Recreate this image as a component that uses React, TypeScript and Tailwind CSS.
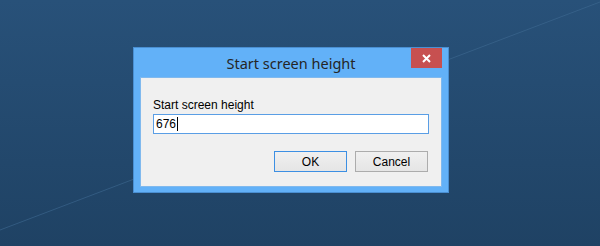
import React from 'react'

function Desktop({ children }: { children: React.ReactNode }) {
  return (
    <div className="relative h-[246px] w-[600px] overflow-hidden bg-gradient-to-b from-[#285179] to-[#1f4264]">
      <svg className="absolute inset-0" width="600" height="246" viewBox="0 0 600 246">
        <line x1="0" y1="230" x2="600" y2="2" stroke="#3f6a92" strokeWidth="1" opacity="0.6" />
      </svg>
      <div className="relative pl-[133px] pt-[47px]">{children}</div>
    </div>
  )
}

function CloseButton() {
  return (
    <button className="flex h-[20px] w-[31px] items-center justify-center bg-[#c75050]">
      <svg width="9" height="9" viewBox="0 0 9 9">
        <path d="M1 1 L8 8 M8 1 L1 8" stroke="#ffffff" strokeWidth="2" />
      </svg>
    </button>
  )
}

function WinButton({ label, primary }: { label: string; primary?: boolean }) {
  return (
    <button
      className={`h-[21px] w-[73px] border bg-gradient-to-b from-[#f0f0f0] to-[#e5e5e5] text-[12px] text-black ${
        primary ? 'border-[#3c8fe3]' : 'border-[#acacac]'
      }`}
      style={{ fontFamily: '"Liberation Sans", Arial, sans-serif' }}
    >
      {label}
    </button>
  )
}

export default function App() {
  return (
    <Desktop>
      <div className="flex h-[146px] w-[316px] flex-col border border-[#4a8fd2] bg-[#62b1f8] px-[6px] pb-[5px]">
        <div className="relative flex h-[29px] items-center justify-center">
          <span
            className="pt-[2px] text-[14.5px] text-[#252525]"
            style={{ fontFamily: '"Noto Sans", "Open Sans", sans-serif' }}
          >
            Start screen height
          </span>
          <div className="absolute right-0 top-0">
            <CloseButton />
          </div>
        </div>
        <div
          className="flex flex-1 flex-col border border-[#80b9ee] bg-[#f0f0f0] pl-[12px] pr-[13px] pt-[20px]"
          style={{ fontFamily: '"Liberation Sans", Arial, sans-serif' }}
        >
          <label className="text-[12px] leading-[14px] text-black">Start screen height</label>
          <div className="mt-[2px] flex h-[20px] w-[276px] items-center border border-[#5a9ee5] bg-white px-[2px] text-[12px] text-black">
            <span>676</span>
            <span className="ml-px h-[14px] w-px bg-black" />
          </div>
          <div className="mt-[17px] flex justify-end gap-[8px]">
            <WinButton label="OK" primary />
            <WinButton label="Cancel" />
          </div>
        </div>
      </div>
    </Desktop>
  )
}
